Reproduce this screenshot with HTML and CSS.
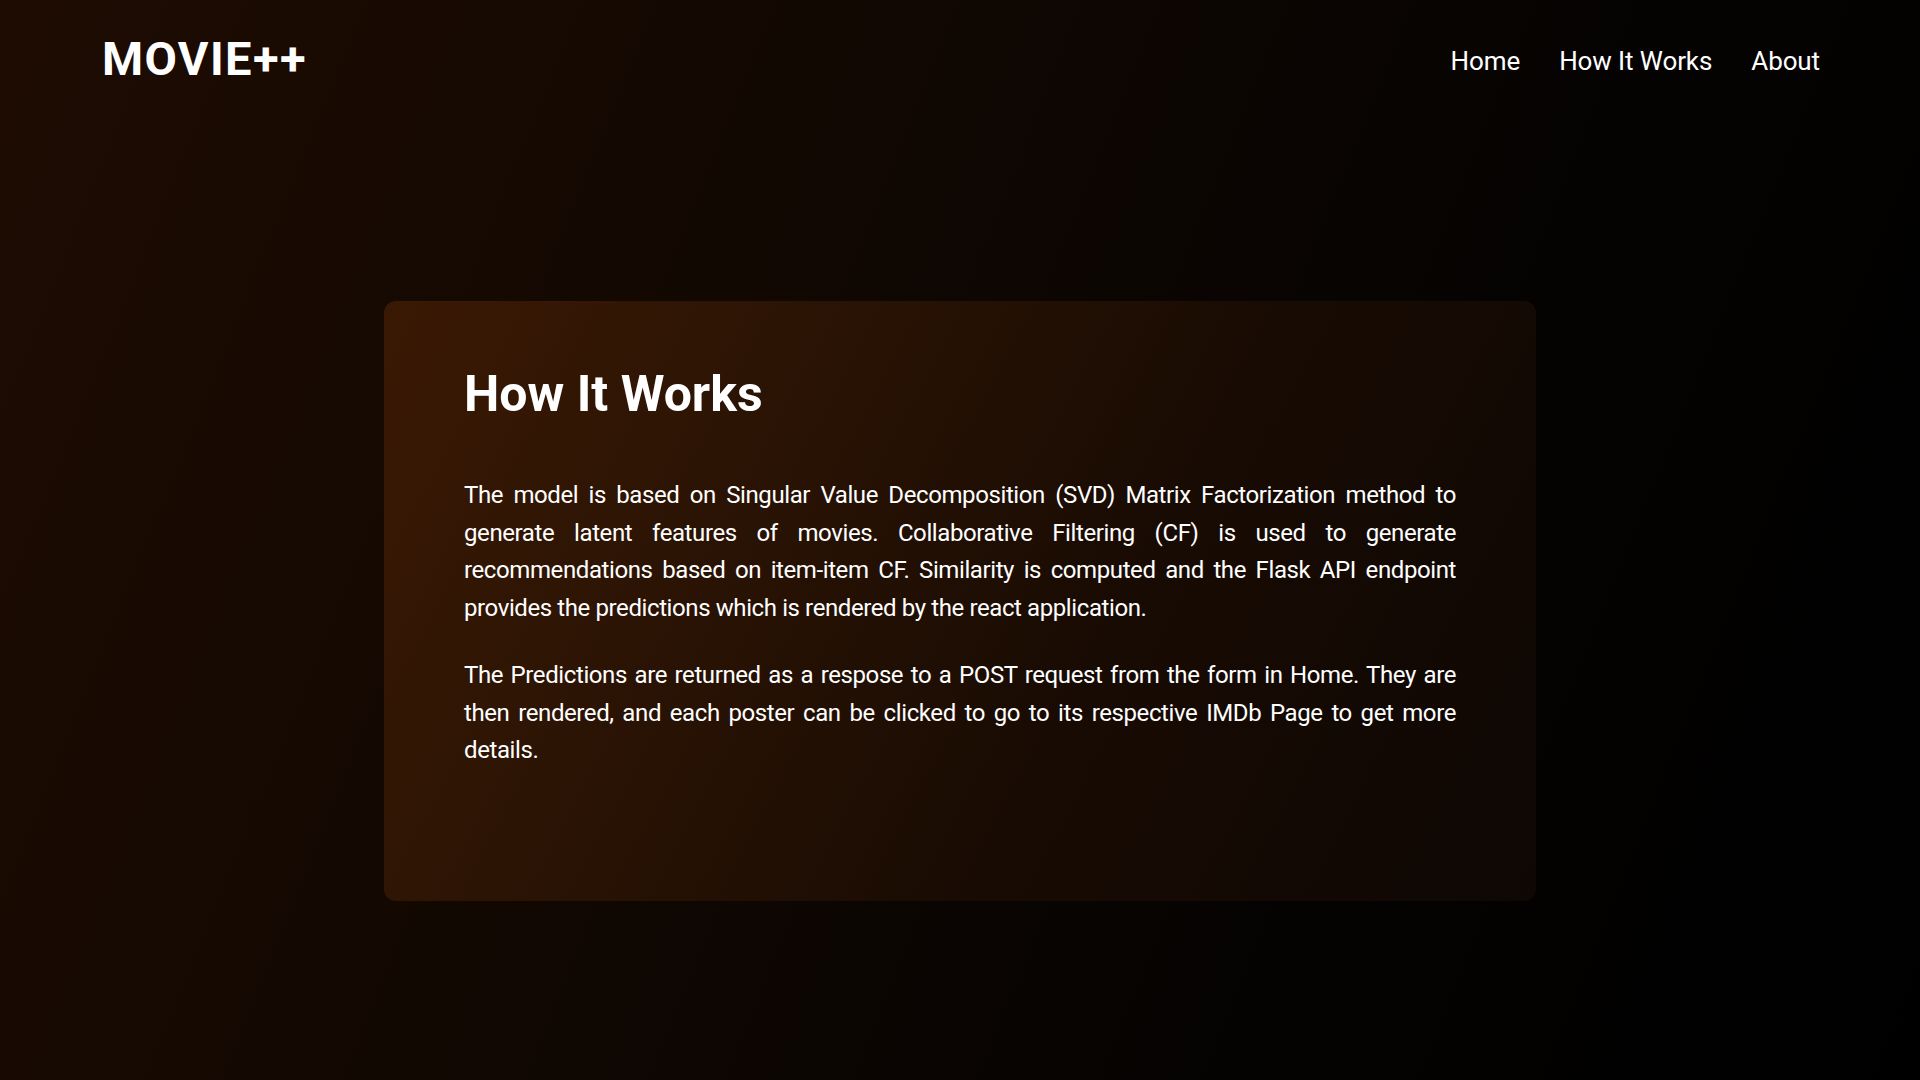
FILE: index.html
```html
<!DOCTYPE html>
<html lang="en">
<head>
<meta charset="utf-8">
<title>MOVIE++ | How It Works</title>
<link rel="stylesheet" href="styles.css">
</head>
<body>
<header class="topbar">
  <div class="logo">MOVIE++</div>
  <nav class="nav">
    <a class="nav-link" href="#">Home</a>
    <a class="nav-link" href="#">How It Works</a>
    <a class="nav-link" href="#">About</a>
  </nav>
</header>
<main class="page">
  <section class="card">
    <h1 class="card-title">How It Works</h1>
    <p class="card-text">The model is based on Singular Value Decomposition (SVD) Matrix Factorization method to generate latent features of movies. Collaborative Filtering (CF) is used to generate recommendations based on item-item CF. Similarity is computed and the Flask API endpoint provides the predictions which is rendered by the react application.</p>
    <p class="card-text">The Predictions are returned as a respose to a POST request from the form in Home. They are then rendered, and each poster can be clicked to go to its respective IMDb Page to get more details.</p>
  </section>
</main>
</body>
</html>
```

FILE: styles.css
```css
* { box-sizing: border-box; }

html, body {
  margin: 0;
  height: 100%;
}

body {
  font-family: Roboto, "Noto Sans", sans-serif;
  color: #ffffff;
  background: linear-gradient(112deg, #1e0c02 0%, #120802 35%, #050302 70%, #000000 100%);
  min-height: 100vh;
}

.topbar {
  display: flex;
  justify-content: space-between;
  align-items: flex-start;
  padding: 31px 100px 0 102px;
  height: 122px;
}

.logo {
  font-size: 47px;
  font-weight: 700;
  line-height: 56px;
  letter-spacing: 1.4px;
}

.nav {
  display: flex;
  gap: 39px;
  padding-top: 14px;
}

.nav-link {
  color: #ffffff;
  text-decoration: none;
  font-size: 26px;
  font-weight: 400;
  line-height: 32px;
  letter-spacing: -0.1px;
}

.page {
  display: flex;
  justify-content: center;
  padding-top: 179px;
}

.card {
  width: 1152px;
  min-height: 600px;
  padding: 62px 80px 80px;
  border-radius: 12px;
  background: linear-gradient(118deg, #3a1904 0%, #2c1404 28%, #180b03 62%, #0e0704 100%);
}

.card-title {
  margin: 0 0 52px;
  font-size: 50px;
  font-weight: 700;
  line-height: 62px;
}

.card-text {
  margin: 0 0 30px;
  font-size: 24px;
  line-height: 37.5px;
  text-align: justify;
  letter-spacing: -0.4px;
}

.card-text:last-child {
  margin-bottom: 0;
}
```
